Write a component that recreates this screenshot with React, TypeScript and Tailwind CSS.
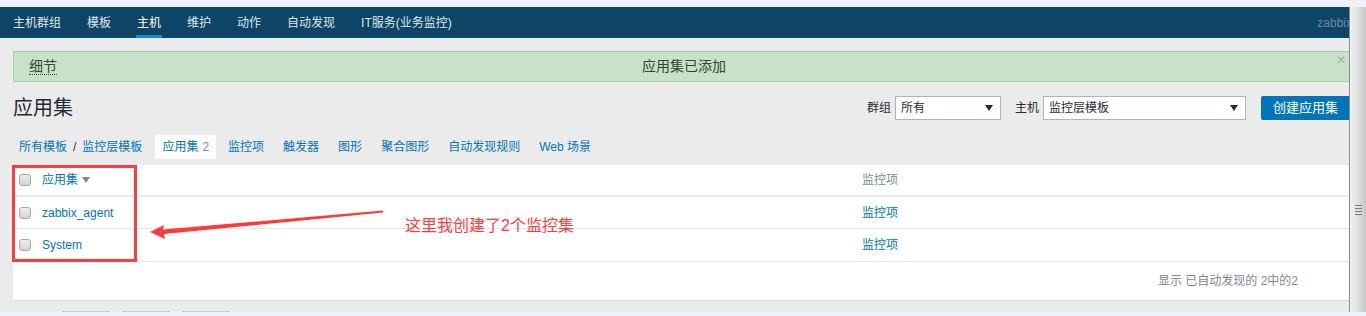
import React from 'react';

const font = "font-['Liberation_Sans','Noto_Sans_CJK_SC',sans-serif]";

const navItems = ['主机群组', '模板', '主机', '维护', '动作', '自动发现', 'IT服务(业务监控)'];
const subLinks = ['监控项', '触发器', '图形', '聚合图形', '自动发现规则', 'Web 场景'];

const Checkbox: React.FC = () => (
    <span className="block w-[12px] h-[12px] rounded-[3px] border border-[#a9a9a9] bg-gradient-to-b from-[#ececec] to-[#d4d4d4]" />
);

const SelectBox: React.FC<{ value: string; width: string }> = ({ value, width }) => (
    <div className={`${width} h-[24px] bg-white border border-[#acb5bd] flex items-center justify-between pl-[5px] pr-[7px]`}>
        <span className="text-[12px] text-[#1f2c33]">{value}</span>
        <svg width="8" height="6" viewBox="0 0 8 6"><path d="M0 0h8L4 6z" fill="#1f2c33" /></svg>
    </div>
);

const App: React.FC = () => {
    return (
        <div className={`${font} w-[1366px] h-[316px] bg-[#eef3fb] overflow-hidden relative`}>
            <div className="h-[7px]" />
            <div className="flex h-[305px]">
                <div className="w-[1349px] h-full bg-[#ebebeb] overflow-hidden flex flex-col">
                    {/* top navigation */}
                    <nav className="h-[31px] shrink-0 bg-[#0e4466] flex items-stretch">
                        <div className="flex items-stretch pl-[12px] gap-[24px]">
                            {navItems.map((item) => (
                                <div
                                    key={item}
                                    className={`flex items-center px-[1px] text-[12px] text-[#dfe8ef] border-b-[3px] pt-[3px] ${item === '主机' ? 'border-[#1f85cc] text-white' : 'border-transparent'}`}
                                >
                                    {item}
                                </div>
                            ))}
                        </div>
                        <div className="ml-auto flex items-center text-[12px] text-[#6b8ba5] -mr-[3px]">zabbix</div>
                    </nav>

                    <div className="pl-[13px] flex flex-col">
                        {/* message */}
                        <div className="mt-[13px] w-[1342px] h-[31px] shrink-0 bg-[#c8e1c8] border border-[#9ed49e] flex items-center relative">
                            <span className="ml-[15px] text-[14px] text-[#2b4a2b] border-b border-dotted border-[#2b4a2b] leading-[16px]">细节</span>
                            <span className="absolute left-0 right-0 text-center text-[14px] text-[#2b4a2b] pointer-events-none">应用集已添加</span>
                            <span className="absolute left-[1322px] top-[2px] text-[12px] text-[#86c486] leading-none">✕</span>
                        </div>

                        {/* title and filters */}
                        <div className="mt-[14px] w-[1340px] h-[24px] flex items-center">
                            <h1 className="text-[20px] text-[#1f2c33] font-normal leading-none">应用集</h1>
                            <div className="ml-auto flex items-center">
                                <span className="text-[12px] text-[#1f2c33] mr-[4px]">群组</span>
                                <SelectBox value="所有" width="w-[106px]" />
                                <span className="text-[12px] text-[#1f2c33] ml-[14px] mr-[4px]">主机</span>
                                <SelectBox value="监控层模板" width="w-[203px]" />
                                <div className="ml-[15px] w-[92px] h-[24px] bg-[#0275b8] rounded-[2px] flex items-center pl-[12px] text-[13px] text-white">
                                    创建应用集
                                </div>
                            </div>
                        </div>

                        {/* breadcrumbs */}
                        <div className="mt-[15px] h-[24px] flex items-center text-[12px] text-[#0275b8]">
                            <span className="ml-[6px]">所有模板</span>
                            <span className="mx-[6px] text-[#1f2c33]">/</span>
                            <span>监控层模板</span>
                            <div className="ml-[13px] h-[24px] bg-white rounded-[2px] px-[7px] flex items-center">
                                应用集<span className="ml-[4px] text-[#7b8a96]">2</span>
                            </div>
                            <div className="ml-[12px] flex items-center gap-[19px]">
                                {subLinks.map((l) => (
                                    <span key={l}>{l}</span>
                                ))}
                            </div>
                        </div>

                        {/* table */}
                        <div className="mt-[6px] w-[1342px] bg-white border-b border-[#d9d9d9] text-[12px]">
                            <div className="h-[32px] flex items-center border-b-2 border-[#ebebeb]">
                                <div className="w-[29px] pl-[6px]"><Checkbox /></div>
                                <div className="w-[820px] flex items-center text-[#0275b8]">
                                    应用集
                                    <svg className="ml-[4px]" width="8" height="6" viewBox="0 0 8 6"><path d="M0 0h8L4 6z" fill="#7b8a96" /></svg>
                                </div>
                                <div className="text-[#7b8a96]">监控项</div>
                            </div>
                            <div className="h-[32px] flex items-center border-b border-[#e6e6e6]">
                                <div className="w-[29px] pl-[6px]"><Checkbox /></div>
                                <div className="w-[820px] text-[#0275b8]">zabbix_agent</div>
                                <div className="text-[#0275b8]">监控项</div>
                            </div>
                            <div className="h-[33px] flex items-center border-b border-[#e6e6e6]">
                                <div className="w-[29px] pl-[6px]"><Checkbox /></div>
                                <div className="w-[820px] text-[#0275b8]">System</div>
                                <div className="text-[#0275b8]">监控项</div>
                            </div>
                            <div className="h-[38px] flex items-center justify-end pr-[57px] text-[#7b8a96]">
                                显示 已自动发现的 2中的2
                            </div>
                        </div>

                        <div className="mt-[10px] flex gap-[12px] pl-[49px]">
                            <div className="w-[48px] h-[2px] border-t border-[#cfcfcf]" />
                            <div className="w-[48px] h-[2px] border-t border-[#cfcfcf]" />
                            <div className="w-[48px] h-[2px] border-t border-[#cfcfcf]" />
                        </div>
                    </div>
                </div>

                {/* scrollbar */}
                <div className="w-[17px] h-full border-l border-[#8c8c8c] bg-gradient-to-r from-[#f2f2f2] via-[#e0e0e0] to-[#c6c6c6] flex flex-col items-center pt-[198px]">
                    <div className="w-[7px] flex flex-col gap-[2px]">
                        <div className="h-[1px] bg-[#7a7a7a]" />
                        <div className="h-[1px] bg-[#7a7a7a]" />
                        <div className="h-[1px] bg-[#7a7a7a]" />
                        <div className="h-[1px] bg-[#7a7a7a]" />
                    </div>
                </div>
            </div>

            {/* annotation overlay */}
            <div className="absolute left-[12px] top-[165px] w-[125px] h-[97px] border-[3px] border-[#ff3b3b]" />
            <svg className="absolute left-0 top-0" width="1366" height="316">
                <polygon points="150,232 164,225 163,229.5 383,210.5 383,212.5 164,234 165,239" fill="#ff3b3b" />
            </svg>
            <div className="absolute left-[405px] top-[215px] text-[16px] text-[#ff3b3b] leading-[22px]">
                这里我创建了2个监控集
            </div>
        </div>
    );
};

export default App;
